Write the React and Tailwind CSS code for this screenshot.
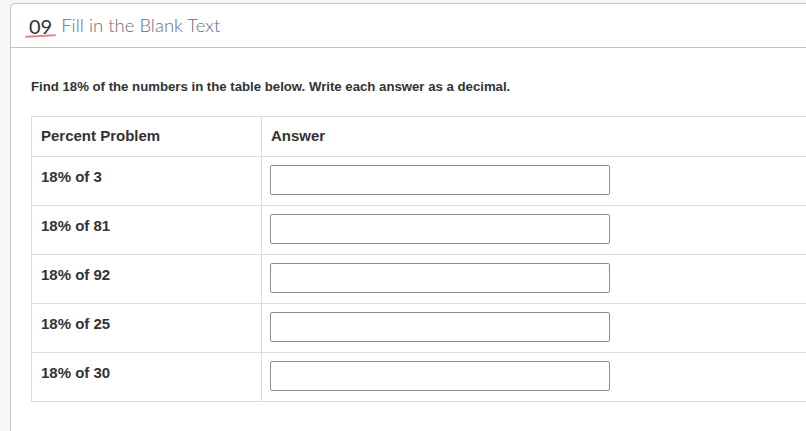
const rows = ['18% of 3', '18% of 81', '18% of 92', '18% of 25', '18% of 30'];

export default function App() {
  return (
    <div className="h-[431px] w-[806px] overflow-hidden bg-[#f7f7f8] pl-[10px] pt-[3px] font-['Liberation_Sans',Arial,sans-serif]">
      <div className="h-full w-[820px] rounded-tl-[5px] border-l border-t border-[#c4c4c4] bg-white">
        <div className="flex h-[44px] items-center border-b border-[#c4c4c4] pl-[18px] font-['Lato',sans-serif]">
          <span className="relative text-[20px] leading-none text-[#333]">
            09
            <span className="absolute -left-[4px] top-[19px] h-[2px] w-[31px] -rotate-3 rounded-full bg-[#ec7f8c]" />
          </span>
          <span className="ml-[9px] text-[18.5px] font-light leading-none text-[#6e6a7c]">Fill in the Blank Text</span>
        </div>

        <p className="ml-[20px] mt-[31px] text-[13.2px] font-bold leading-[16px] text-[#333]">
          Find 18% of the numbers in the table below. Write each answer as a decimal.
        </p>

        <table className="ml-[20px] mt-[21px] w-[800px] border-collapse text-[15px] font-bold text-[#333]">
          <thead>
            <tr className="h-[40px]">
              <th className="w-[230px] border border-[#dcdcdc] px-[9px] text-left">Percent Problem</th>
              <th className="border border-[#dcdcdc] px-[9px] text-left">Answer</th>
            </tr>
          </thead>
          <tbody>
            {rows.map((row) => (
              <tr key={row} className="h-[49px]">
                <td className="border border-[#dcdcdc] px-[9px] pb-[8px] align-middle">{row}</td>
                <td className="border border-[#dcdcdc] px-[8px] pt-[8px] align-top">
                  <input
                    type="text"
                    className="block h-[30px] w-[340px] rounded-[2px] border border-[#8c8c8c] bg-white"
                  />
                </td>
              </tr>
            ))}
          </tbody>
        </table>
      </div>
    </div>
  );
}
